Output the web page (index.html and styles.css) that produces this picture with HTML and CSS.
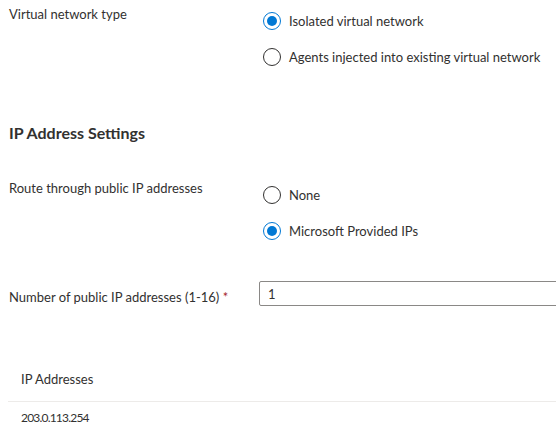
FILE: index.html
```html
<!DOCTYPE html>
<html lang="en">
<head>
<meta charset="utf-8">
<title>IP Address Settings</title>
<link rel="stylesheet" href="styles.css">
</head>
<body>
<div class="form">
  <div class="row row-radio">
    <div class="label">Virtual network type</div>
    <div class="options">
      <div class="radio checked"><span class="dot"></span><span>Isolated virtual network</span></div>
      <div class="radio"><span class="dot"></span><span>Agents injected into existing virtual network</span></div>
    </div>
  </div>

  <h2 class="section">IP Address Settings</h2>

  <div class="row row-radio row-route">
    <div class="label">Route through public IP addresses</div>
    <div class="options">
      <div class="radio"><span class="dot"></span><span>None</span></div>
      <div class="radio checked"><span class="dot"></span><span>Microsoft Provided IPs</span></div>
    </div>
  </div>

  <div class="row row-input">
    <div class="label">Number of public IP addresses (1-16) <span class="req">*</span></div>
    <div class="field"><input class="text" type="text" value="1"></div>
  </div>

  <div class="grid">
    <div class="th">IP Addresses</div>
    <div class="td">203.0.113.254</div>
  </div>
</div>
</body>
</html>
```

FILE: styles.css
```css
html, body {
  margin: 0;
  padding: 0;
  background: #ffffff;
}

body {
  font-family: "Segoe UI", Lato, "Noto Sans", sans-serif;
  font-size: 13px;
  line-height: 20px;
  color: #323130;
  overflow: hidden;
}

.form {
  padding-left: 9px;
}

.row {
  display: grid;
  grid-template-columns: 250px 1fr;
}

.label {
  padding-top: 4px;
}

.options {
  display: flex;
  flex-direction: column;
  gap: 16px;
  padding-top: 11px;
}

.radio {
  display: flex;
  align-items: center;
  gap: 8px;
  height: 20px;
  margin-left: 4px;
  white-space: nowrap;
}

.dot {
  box-sizing: border-box;
  width: 18px;
  height: 18px;
  border: 1px solid #323130;
  border-radius: 50%;
  flex: none;
  position: relative;
}

.radio.checked .dot {
  border-color: #0078d4;
}

.radio.checked .dot::after {
  content: "";
  position: absolute;
  left: 3px;
  top: 3px;
  width: 10px;
  height: 10px;
  border-radius: 50%;
  background: #0078d4;
}

.section {
  margin: 56px 0 0;
  font-size: 16px;
  line-height: 20px;
  font-weight: 700;
  color: #323130;
}

.row-route {
  margin-top: 31px;
}

.row-input {
  margin-top: 40px;
}

.row-input .label {
  padding-top: 6px;
}

.req {
  color: #a4262c;
}

.field {
  min-width: 0;
}

.text {
  box-sizing: border-box;
  display: block;
  width: 320px;
  height: 25px;
  margin: 0;
  padding: 0 8px;
  border: 1px solid #8a8886;
  border-radius: 2px;
  font: inherit;
  color: #323130;
  background: #fff;
  outline: none;
}

.grid {
  margin: 53px 0 0 -1px;
}

.th {
  padding: 9px 13px 12px;
  border-bottom: 1px solid #edebe9;
}

.td {
  padding: 6px 13px;
  font-size: 12px;
  letter-spacing: -0.8px;
}
```
